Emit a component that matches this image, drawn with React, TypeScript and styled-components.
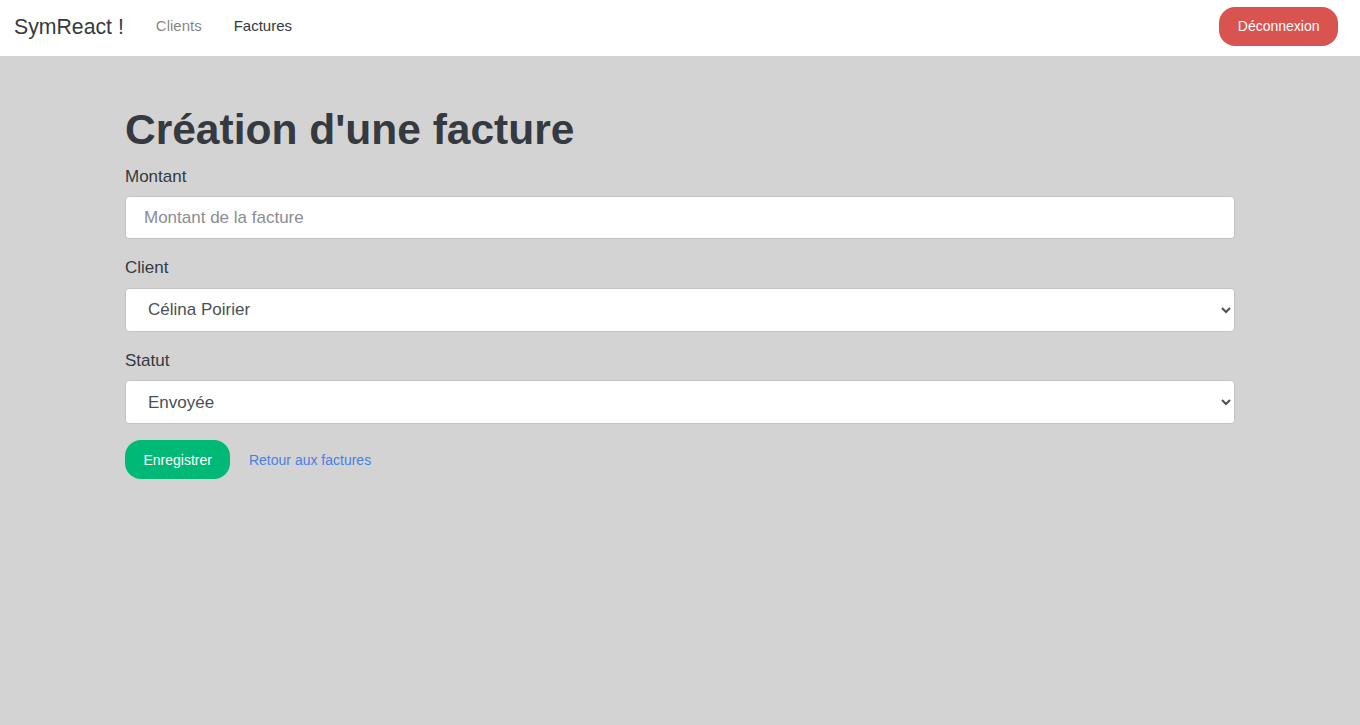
import React from "react";
import styled, { createGlobalStyle } from "styled-components";

const Global = createGlobalStyle`
  html { font-size: 17px; }
  body {
    margin: 0;
    background: #d3d3d3;
    font-family: "Liberation Sans", Arial, Helvetica, sans-serif;
    color: #343a40;
    line-height: 1.5;
  }
  * { box-sizing: border-box; }
`;

const Navbar = styled.nav`
  height: 56px;
  background: #ffffff;
  display: flex;
  align-items: center;
  padding: 0 22px 4px 14px;
`;

const Brand = styled.a`
  font-size: 21.25px;
  color: #343a40;
  text-decoration: none;
  line-height: 1.5;
  margin-right: 16px;
  margin-top: 4px;
`;

const NavList = styled.div`
  display: flex;
  align-items: center;
  flex: 1;
`;

const NavLink = styled.a<{ $active?: boolean }>`
  font-size: 15px;
  padding: 8px 16px;
  text-decoration: none;
  color: ${(p) => (p.$active ? "#343a40" : "rgba(0,0,0,0.5)")};
`;

const Button = styled.button<{ $variant: "danger" | "success" | "link" }>`
  font-family: inherit;
  font-size: 14px;
  height: 39px;
  padding: 0 18.5px;
  border-radius: 16px;
  border: none;
  cursor: pointer;
  background: ${(p) =>
    p.$variant === "danger" ? "#d9534f" : p.$variant === "success" ? "#00b976" : "transparent"};
  color: ${(p) => (p.$variant === "link" ? "#4a80e2" : "#ffffff")};
`;

const Container = styled.main`
  width: 1110px;
  margin: 0 auto;
  padding-top: 48px;
`;

const Title = styled.h1`
  font-size: 42.5px;
  line-height: 1.2;
  font-weight: 700;
  margin: 0 0 8.5px;
  color: #343a40;
`;

const Group = styled.div`
  margin-bottom: 16px;
`;

const Label = styled.label`
  display: block;
  font-size: 17px;
  line-height: 25.5px;
  margin-bottom: 7px;
`;

const Input = styled.input`
  display: block;
  width: 100%;
  height: 43px;
  padding: 0 18px;
  font-family: inherit;
  font-size: 17px;
  color: #495057;
  background: #fff;
  border: 1px solid #c4c4c4;
  border-radius: 4px;
  outline: none;
  &::placeholder { color: #888e94; }
`;

const Select = styled.select`
  display: block;
  width: 100%;
  height: 44px;
  padding: 0 18px;
  font-family: inherit;
  font-size: 17px;
  color: #495057;
  background: #fff;
  border: 1px solid #c4c4c4;
  border-radius: 4px;
  outline: none;
`;

const Actions = styled.div`
  display: flex;
  align-items: center;
`;

export default function App() {
  return (
    <>
      <Global />
      <Navbar>
        <Brand href="#">SymReact !</Brand>
        <NavList>
          <NavLink href="#">Clients</NavLink>
          <NavLink href="#" $active>Factures</NavLink>
        </NavList>
        <Button $variant="danger">Déconnexion</Button>
      </Navbar>
      <Container>
        <Title>Création d'une facture</Title>
        <Group>
          <Label>Montant</Label>
          <Input placeholder="Montant de la facture" />
        </Group>
        <Group>
          <Label>Client</Label>
          <Select defaultValue="1">
            <option value="1">Célina Poirier</option>
          </Select>
        </Group>
        <Group>
          <Label>Statut</Label>
          <Select defaultValue="SENT">
            <option value="SENT">Envoyée</option>
            <option value="PAID">Payée</option>
            <option value="CANCELLED">Annulée</option>
          </Select>
        </Group>
        <Actions>
          <Button $variant="success">Enregistrer</Button>
          <Button $variant="link">Retour aux factures</Button>
        </Actions>
      </Container>
    </>
  );
}
